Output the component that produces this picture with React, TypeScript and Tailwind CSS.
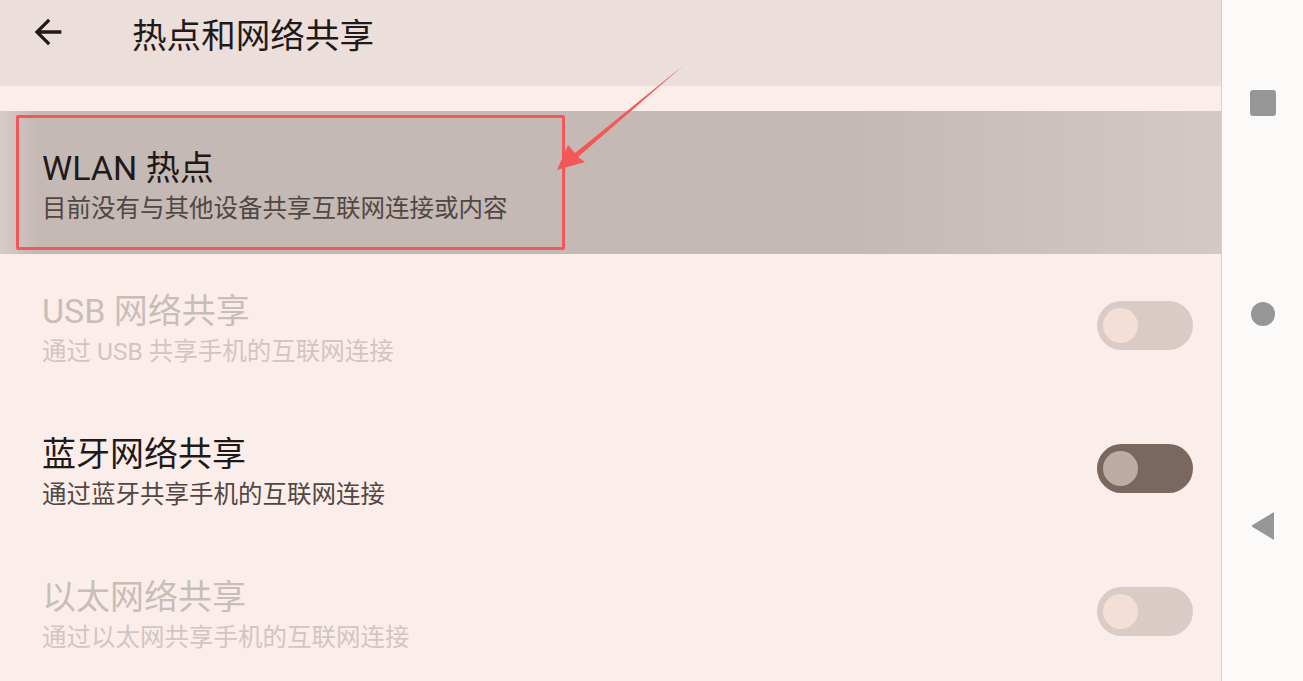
import React from 'react';

type Row = {
  title: string;
  summary: string;
  disabled?: boolean;
  toggle?: 'off' | 'dark' | null;
};

const rows: Row[] = [
  { title: 'WLAN 热点', summary: '目前没有与其他设备共享互联网连接或内容', toggle: null },
  { title: 'USB 网络共享', summary: '通过 USB 共享手机的互联网连接', disabled: true, toggle: 'off' },
  { title: '蓝牙网络共享', summary: '通过蓝牙共享手机的互联网连接', toggle: 'dark' },
  { title: '以太网络共享', summary: '通过以太网共享手机的互联网连接', disabled: true, toggle: 'off' },
];

const Toggle: React.FC<{ kind: 'off' | 'dark' }> = ({ kind }) => (
  <div
    className={
      'w-[96px] h-[49px] rounded-full flex items-center pl-[6px] shrink-0 ' +
      (kind === 'dark' ? 'bg-[#7a6860]' : 'bg-[#dbcbc7]')
    }
  >
    <div
      className={
        'w-[35px] h-[35px] rounded-full ' + (kind === 'dark' ? 'bg-[#bcaca3]' : 'bg-[#f3dfd5]')
      }
    />
  </div>
);

const SettingRow: React.FC<{ row: Row; highlighted?: boolean }> = ({ row, highlighted }) => (
  <div
    className={
      'relative h-[143px] shrink-0 flex items-center pl-[42px] pr-[28px] ' +
      (highlighted
        ? 'bg-[linear-gradient(90deg,#d6cbc7_0%,#c4b9b5_3%,#c4b9b5_70%,#d4c9c5_100%)]'
        : '')
    }
  >
    <div className="flex-1 flex flex-col pt-[7px]">
      <div
        className={
          'text-[34px] leading-[44px] ' + (row.disabled ? 'text-[#c9bdb9]' : 'text-[#1f1a19]')
        }
      >
        {row.title}
      </div>
      <div
        className={
          'text-[24.5px] leading-[36px] mt-[1px] ' +
          (row.disabled ? 'text-[#d2c5c1]' : 'text-[#514743]')
        }
      >
        {row.summary}
      </div>
    </div>
    {row.toggle && <Toggle kind={row.toggle} />}
    {highlighted && (
      <div className="absolute left-[16px] top-[4px] w-[549px] h-[135px] border-[3px] border-[#f45757] rounded-[2px]" />
    )}
  </div>
);

const App: React.FC = () => {
  return (
    <div
      className="relative flex h-screen w-screen overflow-hidden select-none"
      style={{ fontFamily: "Roboto, 'Noto Sans CJK SC', sans-serif" }}
    >
      <div className="w-[1222px] shrink-0 flex flex-col bg-[#fbeeea] border-r border-[#dccfcb]">
        <div className="h-[86px] shrink-0 flex items-center bg-[#ecdfdb]">
          <svg viewBox="0 0 24 24" className="w-[40px] h-[40px] ml-[28px] mb-[22px] fill-[#1f1a19]">
            <path d="M20 11H7.83l5.59-5.59L12 4l-8 8 8 8 1.41-1.41L7.83 13H20v-2z" />
          </svg>
          <div className="ml-[64px] mb-[13px] text-[34.6px] text-[#1f1a19]">热点和网络共享</div>
        </div>
        <div className="h-[25px] shrink-0" />
        {rows.map((r, i) => (
          <SettingRow key={r.title} row={r} highlighted={i === 0} />
        ))}
      </div>

      {/* system nav bar */}
      <div className="flex-1 bg-[#fcf9f9] flex flex-col items-center pt-[90px] gap-[186px] pl-[1px]">
        <div className="w-[26px] h-[26px] rounded-[3px] bg-[#969696]" />
        <div className="w-[24px] h-[24px] rounded-full bg-[#969696]" />
        <svg viewBox="0 0 24 28" className="w-[24px] h-[28px]">
          <path d="M23 1 L23 27 Q23 28 22 27.4 L1.5 15 Q0 14 1.5 13 L22 0.6 Q23 0 23 1 Z" fill="#969696" />
        </svg>
      </div>

      {/* annotation arrow */}
      <svg className="absolute left-0 top-0 pointer-events-none" width="1303" height="681">
        <path d="M684 65 L575 153 L568 145 L557 170 L585 162 L578 157 Z" fill="#f45757" />
      </svg>
    </div>
  );
};

export default App;
